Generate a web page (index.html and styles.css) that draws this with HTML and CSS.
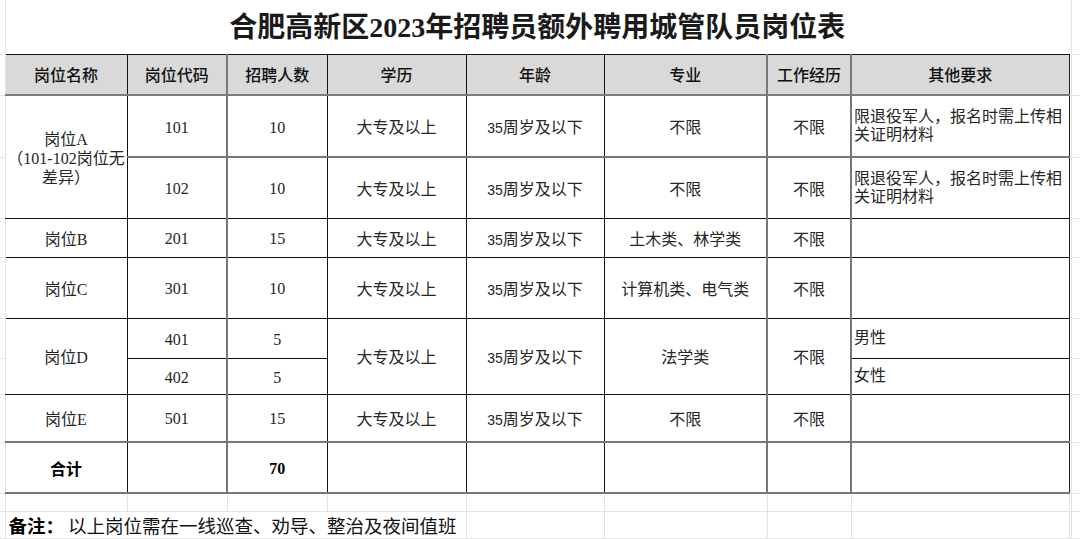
FILE: index.html
```html
<!DOCTYPE html>
<html lang="zh-CN">
<head>
<meta charset="utf-8">
<title>合肥高新区2023年招聘员额外聘用城管队员岗位表</title>
<link rel="stylesheet" href="styles.css">
</head>
<body>
<table class="sheet">
  <colgroup>
    <col class="c0"><col class="c1"><col class="c2"><col class="c3"><col class="c4"><col class="c5"><col class="c6"><col class="c7"><col class="c8"><col class="c9"><col class="c10">
  </colgroup>
  <tr class="r-title">
    <td class="g"></td>
    <td class="title" colspan="8">合肥高新区2023年招聘员额外聘用城管队员岗位表</td>
    <td class="g9"></td><td class="g"></td>
  </tr>
  <tr class="r-head">
    <td class="g"></td>
    <td class="hd">岗位名称</td>
    <td class="hd vg">岗位代码</td>
    <td class="hd">招聘人数</td>
    <td class="hd">学历</td>
    <td class="hd">年龄</td>
    <td class="hd vg">专业</td>
    <td class="hd vg">工作经历</td>
    <td class="hd last">其他要求</td>
    <td class="g9"></td><td class="g"></td>
  </tr>
  <tr class="r-a1">
    <td class="g"></td>
    <td class="cell multi" rowspan="2">岗位A<br>（101-102岗位无<br>差异）</td>
    <td class="cell vg hg num">101</td>
    <td class="cell hg num">10</td>
    <td class="cell hg">大专及以上</td>
    <td class="cell hg"><span class="age">35</span>周岁及以下</td>
    <td class="cell vg hg">不限</td>
    <td class="cell vg hg">不限</td>
    <td class="cell last hg left">限退役军人，报名时需上传相<br>关证明材料</td>
    <td class="g9"></td><td class="g"></td>
  </tr>
  <tr class="r-a2">
    <td class="g"></td>
    <td class="cell vg num">102</td>
    <td class="cell num">10</td>
    <td class="cell">大专及以上</td>
    <td class="cell"><span class="age">35</span>周岁及以下</td>
    <td class="cell vg">不限</td>
    <td class="cell vg">不限</td>
    <td class="cell last left">限退役军人，报名时需上传相<br>关证明材料</td>
    <td class="g9"></td><td class="g"></td>
  </tr>
  <tr class="r-b">
    <td class="g"></td>
    <td class="cell">岗位B</td>
    <td class="cell vg num">201</td>
    <td class="cell num">15</td>
    <td class="cell">大专及以上</td>
    <td class="cell"><span class="age">35</span>周岁及以下</td>
    <td class="cell vg">土木类、林学类</td>
    <td class="cell vg">不限</td>
    <td class="cell last left"></td>
    <td class="g9"></td><td class="g"></td>
  </tr>
  <tr class="r-c">
    <td class="g"></td>
    <td class="cell">岗位C</td>
    <td class="cell vg num">301</td>
    <td class="cell num">10</td>
    <td class="cell">大专及以上</td>
    <td class="cell"><span class="age">35</span>周岁及以下</td>
    <td class="cell vg">计算机类、电气类</td>
    <td class="cell vg">不限</td>
    <td class="cell last left"></td>
    <td class="g9"></td><td class="g"></td>
  </tr>
  <tr class="r-d1">
    <td class="g"></td>
    <td class="cell" rowspan="2">岗位D</td>
    <td class="cell vg num">401</td>
    <td class="cell num">5</td>
    <td class="cell" rowspan="2">大专及以上</td>
    <td class="cell" rowspan="2"><span class="age">35</span>周岁及以下</td>
    <td class="cell vg" rowspan="2">法学类</td>
    <td class="cell vg" rowspan="2">不限</td>
    <td class="cell last left">男性</td>
    <td class="g9"></td><td class="g"></td>
  </tr>
  <tr class="r-d2">
    <td class="g"></td>
    <td class="cell vg num">402</td>
    <td class="cell num">5</td>
    <td class="cell last left">女性</td>
    <td class="g9"></td><td class="g"></td>
  </tr>
  <tr class="r-e">
    <td class="g"></td>
    <td class="cell hg">岗位E</td>
    <td class="cell vg hg num">501</td>
    <td class="cell hg num">15</td>
    <td class="cell hg">大专及以上</td>
    <td class="cell hg"><span class="age">35</span>周岁及以下</td>
    <td class="cell vg hg">不限</td>
    <td class="cell vg hg">不限</td>
    <td class="cell last hg left"></td>
    <td class="g9"></td><td class="g"></td>
  </tr>
  <tr class="r-sum">
    <td class="g"></td>
    <td class="cell hg strong">合计</td>
    <td class="cell vg hg"></td>
    <td class="cell hg strong num">70</td>
    <td class="cell hg"></td>
    <td class="cell hg"></td>
    <td class="cell vg hg"></td>
    <td class="cell vg hg"></td>
    <td class="cell last hg"></td>
    <td class="g9"></td><td class="g"></td>
  </tr>
  <tr class="r-gap">
    <td class="g"></td><td class="g"></td><td class="g"></td><td class="g"></td><td class="g"></td><td class="g"></td><td class="g"></td><td class="g"></td><td class="g"></td>
    <td class="g9"></td><td class="g"></td>
  </tr>
  <tr class="r-note">
    <td class="g"></td>
    <td class="g note" colspan="4"><b class="note-label">备注：</b><span class="note-text">以上岗位需在一线巡查、劝导、整治及夜间值班</span></td>
    <td class="g"></td><td class="g"></td><td class="g"></td><td class="g"></td>
    <td class="g9"></td><td class="g"></td>
  </tr>
  <tr class="r-tail">
    <td class="g"></td><td class="g"></td><td class="g"></td><td class="g"></td><td class="g"></td><td class="g"></td><td class="g"></td><td class="g"></td><td class="g"></td>
    <td class="g9"></td><td class="g"></td>
  </tr>
</table>
</body>
</html>
```
FILE: styles.css
```css
html, body {
  margin: 0;
  padding: 0;
  background: #ffffff;
  overflow: hidden;
  width: 1080px;
  height: 539px;
}

.sheet {
  border-collapse: collapse;
  table-layout: fixed;
  width: 1080px;
  font-family: "Liberation Serif", "Noto Sans CJK SC", serif;
  font-size: 16px;
  color: #262626;
}

.c0 { width: 5px; }
.c1 { width: 122px; }
.c2 { width: 100px; }
.c3 { width: 100px; }
.c4 { width: 139px; }
.c5 { width: 138px; }
.c6 { width: 163px; }
.c7 { width: 84px; }
.c8 { width: 218px; }
.c9 { width: 2px; }
.c10 { width: 9px; }

.sheet td {
  padding: 0;
  text-align: center;
  vertical-align: middle;
  white-space: nowrap;
  overflow: visible;
}

.r-title { height: 54px; }
.r-head { height: 41px; }
.r-a1 { height: 62px; }
.r-a2 { height: 61px; }
.r-b { height: 39px; }
.r-c { height: 61px; }
.r-d1 { height: 40px; }
.r-d2 { height: 36px; }
.r-e { height: 48px; }
.r-sum { height: 51px; }
.r-gap { height: 18px; }
.r-note { height: 26px; }
.r-tail { height: 20px; }

/* spreadsheet gridlines */
.sheet .g {
  border-right: 1px solid #e3e3e3;
  border-bottom: 1px solid #e3e3e3;
}
.sheet .g9 {
  border-right: 1px solid #e3e3e3;
  border-bottom: 1px solid #e3e3e3;
}

.sheet .title {
  font-family: "Liberation Serif", "Noto Sans CJK SC", serif;
  font-size: 28px;
  font-weight: 700;
  color: #1a1a1a;
  border-bottom: 1px solid #111;
  padding-bottom: 3px;
}

.sheet .hd {
  background: #d9d9d9;
  font-family: "Noto Sans CJK SC", sans-serif;
  font-size: 16px;
  font-weight: 500;
  color: #111;
  border-right: 1px solid #111;
  border-bottom: 2px solid #7c7c7c;
}

.sheet .cell {
  border-right: 1px solid #111;
  border-bottom: 1px solid #111;
}

.sheet .vg { border-right: 2px solid #777; }
.sheet .hg { border-bottom: 2px solid #777; }
.sheet .last { border-right: 1px solid #222; }

.sheet .num { padding-top: 3px; }

.sheet .multi { line-height: 19px; padding-top: 3px; }

.sheet .left {
  text-align: left;
  padding-left: 2px;
  line-height: 18px;
}

.age {
  font-family: "Liberation Sans", sans-serif;
  font-size: 14px;
}

.sheet .strong {
  font-weight: 700;
  color: #000;
}

.sheet .note {
  text-align: left;
  padding-left: 3px;
  font-family: "Noto Sans CJK SC", sans-serif;
  font-size: 18.5px;
  color: #111;
}

.note-label {
  font-weight: 700;
  color: #000;
}

.note-text {
  margin-left: 4px;
}
```
